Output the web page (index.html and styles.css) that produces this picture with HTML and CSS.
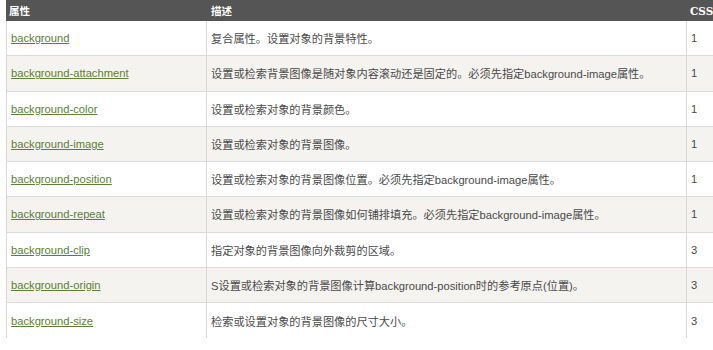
FILE: index.html
```html
<!DOCTYPE html>
<html lang="zh">
<head>
<meta charset="utf-8">
<link rel="stylesheet" href="styles.css">
</head>
<body>
<table class="props">
  <colgroup>
    <col class="c-name">
    <col class="c-desc">
    <col class="c-css">
  </colgroup>
  <thead>
    <tr>
      <th class="first">属性</th>
      <th>描述</th>
      <th class="css">CSS</th>
    </tr>
  </thead>
  <tbody>
    <tr><td><a href="#">background</a></td><td>复合属性。设置对象的背景特性。</td><td>1</td></tr>
    <tr class="alt"><td><a href="#">background-attachment</a></td><td>设置或检索背景图像是随对象内容滚动还是固定的。必须先指定background-image属性。</td><td>1</td></tr>
    <tr><td><a href="#">background-color</a></td><td>设置或检索对象的背景颜色。</td><td>1</td></tr>
    <tr class="alt"><td><a href="#">background-image</a></td><td>设置或检索对象的背景图像。</td><td>1</td></tr>
    <tr><td><a href="#">background-position</a></td><td>设置或检索对象的背景图像位置。必须先指定background-image属性。</td><td>1</td></tr>
    <tr class="alt"><td><a href="#">background-repeat</a></td><td>设置或检索对象的背景图像如何铺排填充。必须先指定background-image属性。</td><td>1</td></tr>
    <tr><td><a href="#">background-clip</a></td><td>指定对象的背景图像向外裁剪的区域。</td><td>3</td></tr>
    <tr class="alt"><td><a href="#">background-origin</a></td><td>S设置或检索对象的背景图像计算background-position时的参考原点(位置)。</td><td>3</td></tr>
    <tr class="last"><td><a href="#">background-size</a></td><td>检索或设置对象的背景图像的尺寸大小。</td><td>3</td></tr>
  </tbody>
</table>
</body>
</html>
```

FILE: styles.css
```css
html, body {
  margin: 0;
  padding: 0;
  background: #fff;
  overflow: hidden;
}

body {
  width: 713px;
  height: 350px;
}

.props {
  margin-left: 6px;
  border-collapse: separate;
  border-spacing: 0;
  table-layout: fixed;
  width: 730px;
  font-family: "Liberation Sans", "Noto Sans CJK SC", Arial, sans-serif;
  font-size: 11.2px;
  color: #4a4a4a;
}

.c-name { width: 200px; }
.c-desc { width: 480px; }
.c-css { width: 50px; }

.props th {
  background: #555;
  color: #fff;
  font-weight: bold;
  font-size: 10.5px;
  text-align: left;
  height: 21px;
  padding: 0 0 0 5px;
  box-sizing: border-box;
  vertical-align: middle;
}

.props th.first {
  padding-left: 3px;
}

.props th.css {
  font-family: "DejaVu Serif", "Liberation Serif", serif;
  font-size: 10.5px;
  padding-left: 4px;
}

.props td {
  height: 35.25px;
  box-sizing: border-box;
  padding: 0 0 0 4px;
  border-left: 1px solid #d8d8d8;
  border-bottom: 1px solid #dcdcdc;
  vertical-align: middle;
  white-space: nowrap;
}

.props tr.last td {
  border-bottom: none;
}

.props tr.alt td {
  background: #f5f3ef;
}

.props a {
  color: #5a7f37;
  text-decoration: underline;
}
```
